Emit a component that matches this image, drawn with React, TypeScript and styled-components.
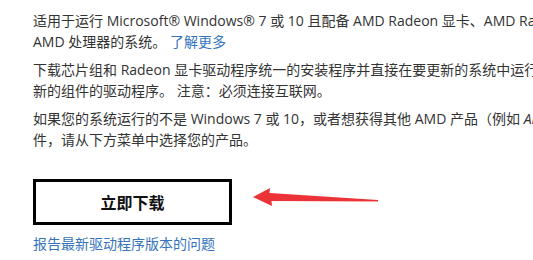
import styled, { createGlobalStyle } from 'styled-components';

const GlobalStyle = createGlobalStyle`
  html, body {
    margin: 0;
    padding: 0;
    background: #ffffff;
    overflow: hidden;
  }
`;

const Page = styled.div`
  padding: 10px 0 0 33px;
  font-family: "Open Sans", "Noto Sans CJK SC", sans-serif;
  font-size: 14px;
  color: #333333;
  width: 533px;
  box-sizing: border-box;
  overflow: hidden;
`;

const Paragraph = styled.p`
  margin: 0 0 7px;
  line-height: 21px;
`;

const Line = styled.span`
  display: block;
  white-space: nowrap;
`;

const Link = styled.a`
  color: #3574bd;
  text-decoration: none;
  cursor: pointer;
`;

const ActionRow = styled.div`
  display: flex;
  align-items: flex-start;
  gap: 21px;
  margin-top: 29px;
`;

const DownloadButton = styled.button`
  flex: none;
  width: 199px;
  height: 46px;
  box-sizing: border-box;
  border: 3px solid #000000;
  background: #ffffff;
  font-family: "Noto Sans CJK SC", sans-serif;
  font-size: 16px;
  font-weight: 700;
  color: #111111;
  cursor: pointer;
  padding: 0;
`;

const Arrow = styled.svg`
  flex: none;
  margin-top: 8px;
`;

const ReportLink = styled(Link)`
  display: block;
  margin-top: 8px;
  line-height: 21px;
  font-family: "Noto Sans CJK SC", sans-serif;
`;

export default function App() {
  return (
    <>
      <GlobalStyle />
      <Page>
        <Paragraph>
          <Line>适用于运行 Microsoft® Windows® 7 或 10 且配备 AMD Radeon 显卡、AMD Radeon Vega 显卡或</Line>
          <Line>
            AMD 处理器的系统。 <Link>了解更多</Link>
          </Line>
        </Paragraph>
        <Paragraph>
          <Line>下载芯片组和 Radeon 显卡驱动程序统一的安装程序并直接在要更新的系统中运行，以获取最</Line>
          <Line>新的组件的驱动程序。 注意：必须连接互联网。</Line>
        </Paragraph>
        <Paragraph>
          <Line>
            如果您的系统运行的不是 Windows 7 或 10，或者想获得其他 AMD 产品（例如 <em>AMD Radeon Pro</em> 显卡或嵌入式产品）的驱动程序软
          </Line>
          <Line>件，请从下方菜单中选择您的产品。</Line>
        </Paragraph>
        <ActionRow>
          <DownloadButton>立即下载</DownloadButton>
          <Arrow width="126" height="20" viewBox="0 0 126 20">
            <path
              d="M0 10 L17 1 L16.5 6 L125 13 L125 14.5 L18.5 14 L19 19 Z"
              fill="#ec3337"
            />
          </Arrow>
        </ActionRow>
        <ReportLink>报告最新驱动程序版本的问题</ReportLink>
      </Page>
    </>
  );
}
